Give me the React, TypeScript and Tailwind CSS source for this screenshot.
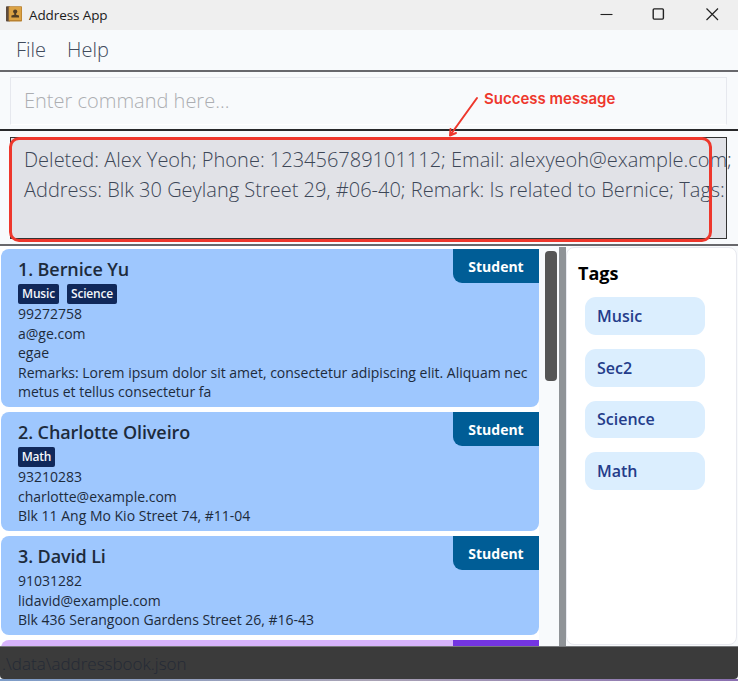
type Contact = {
  name: string;
  nameClass: string;
  height: string;
  tags: { label: string; cls: string }[];
  lines: { text: string; cls: string }[];
};

const contacts: Contact[] = [
  {
    name: "1. Bernice Yu",
    nameClass: "tracking-[-0.1px]",
    height: "h-[158px]",
    tags: [
      { label: "Music", cls: "w-[41px]" },
      { label: "Science", cls: "w-[50px]" },
    ],
    lines: [
      { text: "99272758", cls: "" },
      { text: "a@ge.com", cls: "" },
      { text: "egae", cls: "" },
      { text: "Remarks: Lorem ipsum dolor sit amet, consectetur adipiscing elit. Aliquam nec", cls: "" },
      { text: "metus et tellus consectetur fa", cls: "" },
    ],
  },
  {
    name: "2. Charlotte Oliveiro",
    nameClass: "tracking-[-0.1px]",
    height: "h-[119px]",
    tags: [{ label: "Math", cls: "w-[37px]" }],
    lines: [
      { text: "93210283", cls: "" },
      { text: "charlotte@example.com", cls: "" },
      { text: "Blk 11 Ang Mo Kio Street 74, #11-04", cls: "" },
    ],
  },
  {
    name: "3. David Li",
    nameClass: "tracking-[-0.1px]",
    height: "h-[99px]",
    tags: [],
    lines: [
      { text: "91031282", cls: "" },
      { text: "lidavid@example.com", cls: "" },
      { text: "Blk 436 Serangoon Gardens Street 26, #16-43", cls: "" },
    ],
  },
];

const tagNames = ["Music", "Sec2", "Science", "Math"];

function TitleBar() {
  return (
    <header className="flex h-[30px] shrink-0 items-center bg-[#efefef] pl-[6px] text-[#1b1b1b]">
      <svg width="17" height="16" viewBox="0 0 17 16" className="mb-[3px] shrink-0">
        <rect x="0" y="0.3" width="4" height="15.2" rx="0.8" fill="#5c4a3c" />
        <rect x="2.6" y="0.3" width="13.4" height="15.2" rx="0.8" fill="#b9812f" />
        <rect x="3.2" y="1" width="12" height="13" fill="#dba244" />
        <circle cx="9.2" cy="5.6" r="2.1" fill="#4e3b25" />
        <path d="M8.3 7h1.8v1.8l2.9.8v2H5.4v-2l2.9-.8z" fill="#4e3b25" />
      </svg>
      <span className="ml-[6px] text-[13.5px] leading-[28px] tracking-[-0.1px]">Address App</span>
      <svg width="122" height="14" viewBox="0 0 122 14" className="mb-[3px] ml-auto mr-[17px]" fill="none" stroke="#222">
        <path d="M1.5 7.5h12" strokeWidth="1.1" />
        <rect x="54.2" y="1.9" width="10.2" height="10.2" rx="1" strokeWidth="1.4" />
        <path d="M107.5 1.5l11.5 11.5M119 1.5L107.500 13" strokeWidth="1.2" />
      </svg>
    </header>
  );
}

function ContactCard({ contact }: { contact: Contact }) {
  return (
    <article className={`flex shrink-0 overflow-hidden rounded-[8px] rounded-tr-none bg-[#9ec7fe] ${contact.height}`}>
      <div className="min-w-0 flex-1 pl-[17px] pt-[8px] text-[#1d2b3c]">
        <h2 className={`mb-[2px] h-[25px] whitespace-nowrap text-[18px] font-semibold leading-[25px] ${contact.nameClass}`}>
          {contact.name}
        </h2>
        {contact.tags.length > 0 && (
          <div className="flex h-[20px] gap-[8px]">
            {contact.tags.map((t) => (
              <span
                key={t.label}
                className={`flex h-[20px] items-center justify-center rounded-[2px] bg-[#10285a] text-[12px] font-semibold tracking-[-0.2px] text-[#f3f6fb] ${t.cls}`}
              >
                {t.label}
              </span>
            ))}
          </div>
        )}
        {contact.lines.map((l) => (
          <p key={l.text} className={`h-[19.6px] whitespace-nowrap text-[14px] leading-[19.6px] ${l.cls}`}>
            {l.text}
          </p>
        ))}
      </div>
      <span className="-ml-[86px] flex h-[34px] w-[86px] shrink-0 items-center justify-center rounded-bl-[9px] bg-[#005d96] text-[14px] font-bold text-white">
        Student
      </span>
    </article>
  );
}

export default function App() {
  return (
    <div className="relative flex h-[681px] w-[738px] flex-col overflow-hidden bg-[#f8fafc] font-['Open_Sans','Noto_Sans',sans-serif]">
      <TitleBar />
      <nav className="flex h-[42px] shrink-0 items-center gap-[21px] border-b-2 border-[#68686c] pl-[16px] text-[20px] font-light text-[#414b5c]">
        <span>File</span>
        <span>Help</span>
      </nav>

      <section className="h-[59px] shrink-0 border-b-2 border-[#28282a] px-[10px] pt-[5px]">
        <div className="flex h-[48px] w-[717px] items-center border border-[#e6e8ee] border-b-white pl-[13px] text-[20px] font-light text-[#acaeb2]">
          Enter command here...
        </div>
      </section>

      <section className="h-[115px] shrink-0 border-b-2 border-[#68686c] px-[10px] pt-[6px]">
        <div className="h-[102px] w-[717px] border border-[#333] bg-[#e1e2e7] pl-[13px] pt-[7px] text-[20px] font-light leading-[30px] text-[#3d4757]">
          <p className="whitespace-nowrap">Deleted: Alex Yeoh; Phone: 123456789101112; Email: alexyeoh@example.com;</p>
          <p className="whitespace-nowrap">Address: Blk 30 Geylang Street 29, #06-40; Remark: Is related to Bernice; Tags:</p>
        </div>
      </section>

      <main className="flex h-[400px] shrink-0 overflow-hidden">
        <div className="flex w-[539px] shrink-0 flex-col gap-[5px] overflow-hidden bg-white pl-[1px] pt-[3px]">
          {contacts.map((c) => (
            <ContactCard key={c.name} contact={c} />
          ))}
          <div className="flex h-[20px] shrink-0 justify-end overflow-hidden rounded-tl-[8px] bg-[#d7b4fb]">
            <span className="w-[86px] bg-[#7435e2]" />
          </div>
        </div>
        <div className="flex w-[20px] shrink-0 pl-[6px] pt-[5px]">
          <div className="h-[130px] w-[12px] rounded-[4px] bg-[#555]" />
        </div>
        <div className="mt-px w-[7px] shrink-0 bg-[#8f9397]" />
        <aside className="mt-px h-[398px] w-[171px] rounded-[8px] border border-[#e8e9ef] bg-white pl-[11px] pt-[12px]">
          <h1 className="h-[26px] text-[18px] font-bold leading-[26px] text-black">Tags</h1>
          <ul className="mt-[11px] flex flex-col gap-[14px] pl-[7px]">
            {tagNames.map((t) => (
              <li
                key={t}
                className="flex h-[37.8px] w-[120px] items-center rounded-[11px] bg-[#dbeefe] pl-[12px] text-[16px] font-semibold text-[#243c8a]"
              >
                {t}
              </li>
            ))}
          </ul>
        </aside>
      </main>

      <footer className="h-[33px] shrink-0 rounded-b-[4px] border-t border-[#77797b] bg-[#3b3b3b] pl-[2px] text-[17px] font-light leading-[33px] text-[#242a36]">
        .\data\addressbook.json
      </footer>
      <div className="h-[2px] shrink-0 bg-linear-to-r from-[#7d9cc8] via-[#a9a3b5] to-[#8a6fb0]" />

      <div className="absolute left-[9px] top-[137px] h-[105px] w-[703px] rounded-[10px] border-[3px] border-[#ee372c]" />
      <svg className="absolute left-[444px] top-[92px]" width="40" height="48" viewBox="0 0 40 48" fill="none" stroke="#ee372c" strokeWidth="2" strokeLinecap="round" strokeLinejoin="round">
        <path d="M33 6L6 43.500M6.500 37L6 43.500L12 41" />
      </svg>
      <span className="absolute left-[484px] top-[88px] whitespace-nowrap font-['Inter',sans-serif] text-[15px] font-semibold leading-[22px] text-[#ee372c]">
        Success message
      </span>
    </div>
  );
}
